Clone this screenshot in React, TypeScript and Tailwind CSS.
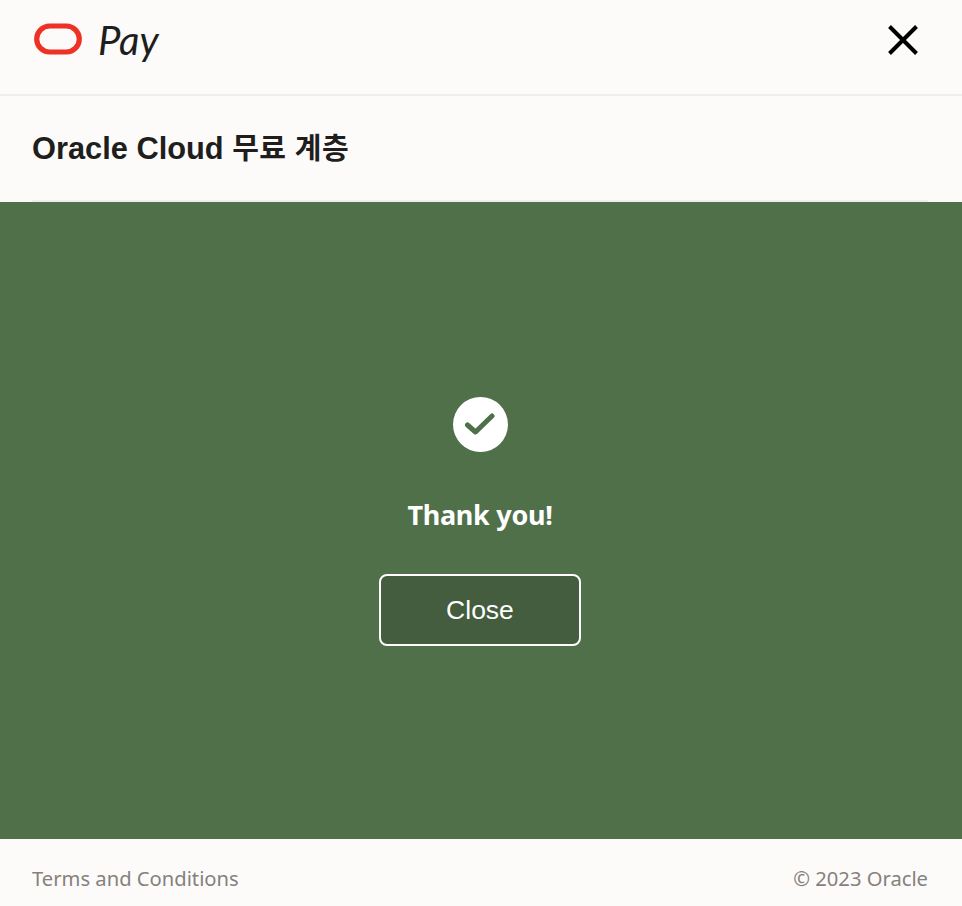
export default function App() {
  return (
    <div className="flex h-[906px] w-[962px] flex-col overflow-hidden bg-[#fcfbfa] font-['Liberation_Sans','Noto_Sans_CJK_KR',sans-serif] text-[#201e1c]">
      {/* Header */}
      <header className="flex h-[96px] shrink-0 items-center justify-between border-b-2 border-[#f0eeec] pl-[34px] pr-[44px] pb-[14px]">
        <div className="flex items-center gap-[16px]">
          <svg className="-mt-[2px]" width="48" height="32" viewBox="0 0 48 32" fill="none">
            <rect x="2.7" y="3" width="42.6" height="26" rx="13" stroke="#ee3124" strokeWidth="5.2" />
          </svg>
          <span className="font-['Lato',sans-serif] text-[40px] italic leading-none">Pay</span>
        </div>
        <svg width="30" height="30" viewBox="0 0 30 30" fill="none" stroke="#000" strokeWidth="4" strokeLinecap="butt">
          <path d="M1.5 1.5 L28.5 28.5 M28.5 1.5 L1.5 28.5" />
        </svg>
      </header>

      {/* Title */}
      <div className="flex h-[106px] shrink-0 flex-col pl-8 pr-[34px]">
        <div className="flex h-[104px] items-center pt-[2px]">
          <h1 className="text-[30.8px] font-bold leading-none">Oracle Cloud <span className="text-[29px] tracking-[0.4px]">무료 계층</span></h1>
        </div>
        <div className="h-[2px] bg-[#f0eeec]" />
      </div>

      {/* Confirmation */}
      <main className="flex flex-1 flex-col items-center justify-center bg-[#50704a] pr-[2px] pt-[1px] text-white">
        <div className="flex h-[55px] w-[55px] items-center justify-center rounded-full bg-white">
          <svg width="32" height="26" viewBox="0 0 32 26" fill="none" stroke="#50704a" strokeWidth="5" strokeLinecap="round" strokeLinejoin="round">
            <path d="M3.5 14 L11.5 21 L28 5" />
          </svg>
        </div>
        <p className="mt-[45px] font-['Noto_Sans',sans-serif] text-[27px] font-bold leading-[36px] tracking-[-0.3px]">Thank you!</p>
        <button className="mt-[41px] h-[72px] w-[202px] rounded-[8px] border-2 border-white bg-[#445d3e] pt-[3px] text-[26.5px] text-white">Close</button>
      </main>

      {/* Footer */}
      <footer className="flex h-[67px] shrink-0 items-center justify-between pl-8 pr-[34px] pt-[12px] font-['Noto_Sans',sans-serif] text-[20.2px] text-[#86817c]">
        <span>Terms and Conditions</span>
        <span>© 2023 Oracle</span>
      </footer>
    </div>
  );
}
